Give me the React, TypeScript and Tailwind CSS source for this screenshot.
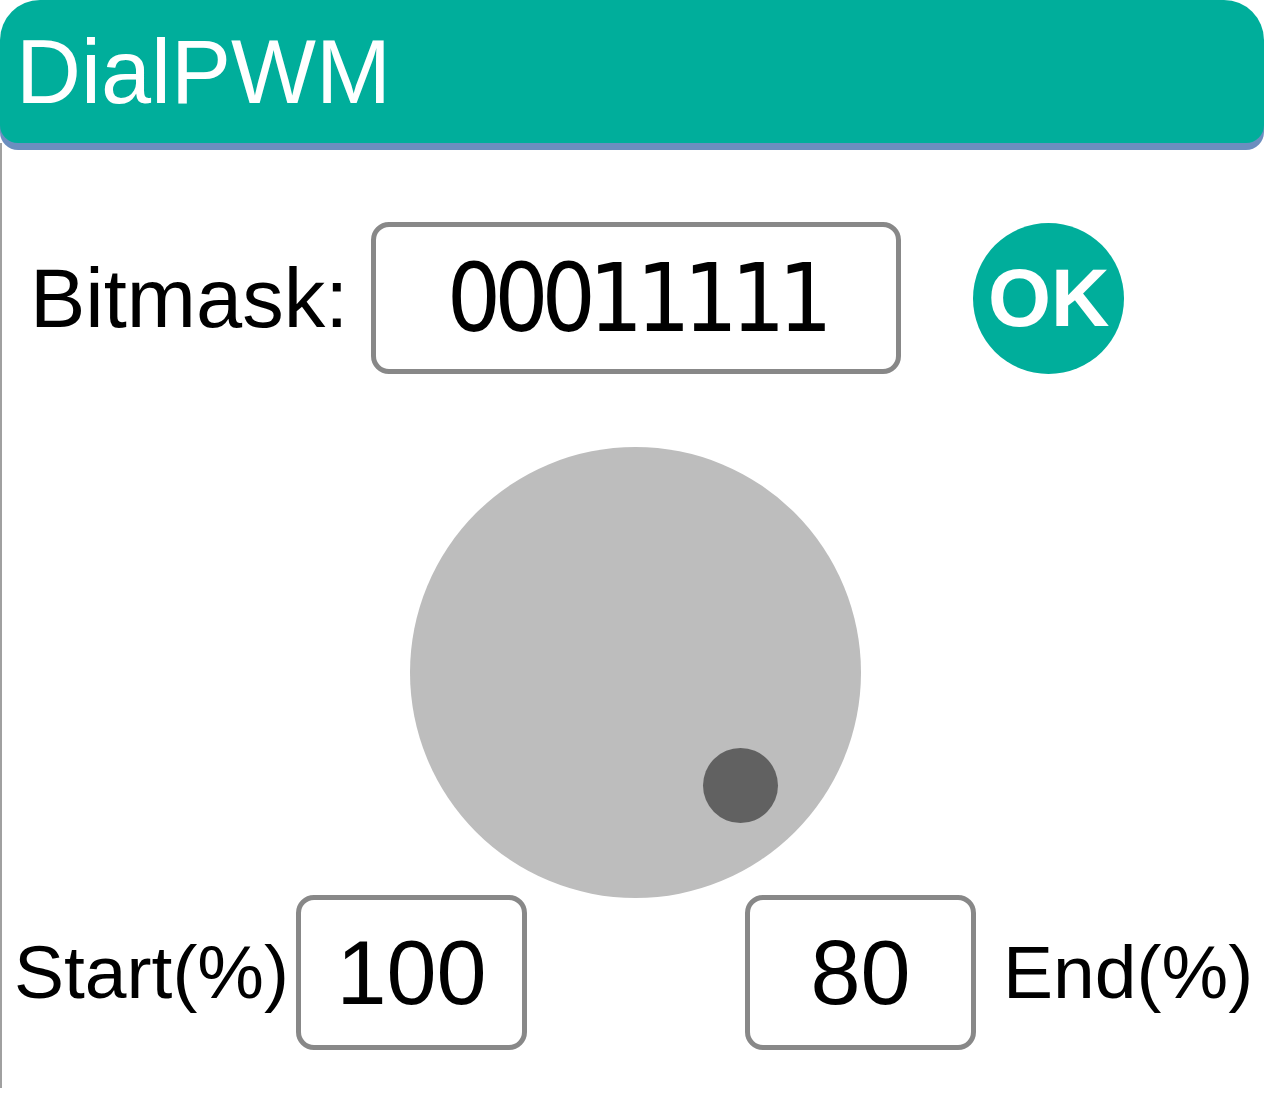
export default function App() {
  return (
    <div className="min-h-[1117px] w-[1264px] bg-white font-['Liberation_Sans',Arial,sans-serif] text-black">
      <div className="relative z-10 flex h-[143px] items-center rounded-t-[40px] rounded-b-[18px] bg-[#00ae9b] pl-[16px] shadow-[0_7px_0_#6c8ebf]">
        <h1 className="text-[90px] leading-none text-white">DialPWM</h1>
      </div>

      <div className="flex h-[945px] flex-col border-l-2 border-[#a0a0a0]">
        <div className="mt-[79px] flex h-[152px] items-center">
          <span className="ml-[28px] text-[83px] leading-none">Bitmask:</span>
          <div className="ml-[23px] flex h-[152px] w-[530px] items-center justify-center rounded-[18px] border-[5px] border-[#888888]">
            <span className="font-['DejaVu_Sans_Condensed','DejaVu_Sans',sans-serif] text-[95px] leading-none tracking-[-7px]">
              00011111
            </span>
          </div>
          <button className="ml-[72px] flex h-[151px] w-[151px] items-center justify-center rounded-full bg-[#00ae9b] text-[81px] font-bold leading-none text-white">
            OK
          </button>
        </div>

        <div className="mt-[73px] flex justify-center pl-[4px]">
          <div className="relative h-[451px] w-[451px] rounded-full bg-[#bdbdbd]">
            <div className="absolute left-[293px] top-[301px] h-[75px] w-[75px] rounded-full bg-[#616161]" />
          </div>
        </div>

        <div className="-mt-[3px] flex h-[155px] items-center">
          <span className="ml-[12px] text-[75px] leading-none">Start(%)</span>
          <div className="ml-[7px] flex h-[155px] w-[231px] items-center justify-center rounded-[18px] border-[5px] border-[#888888]">
            <span className="text-[90px] leading-none">100</span>
          </div>
          <div className="ml-[218px] flex h-[155px] w-[231px] items-center justify-center rounded-[18px] border-[5px] border-[#888888]">
            <span className="text-[90px] leading-none">80</span>
          </div>
          <span className="ml-[27px] text-[75px] leading-none">End(%)</span>
        </div>
      </div>
    </div>
  );
}
